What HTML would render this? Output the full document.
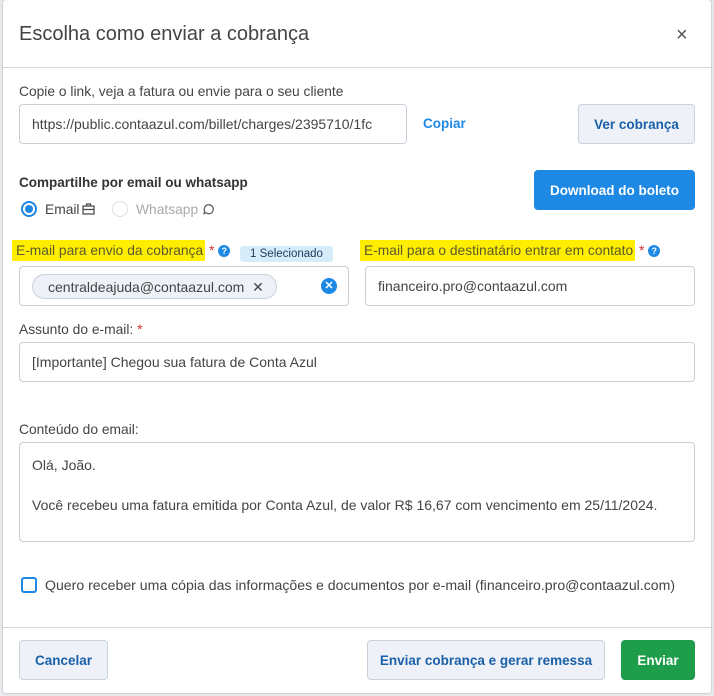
<!DOCTYPE html>
<html><head><meta charset="utf-8"><style>
*{box-sizing:border-box;margin:0;padding:0}
body{width:714px;height:696px;background:#e9ebee;font-family:"Liberation Sans",sans-serif;color:#333;position:relative;overflow:hidden}
.m{position:absolute;left:3px;top:0;width:708px;height:693px;background:#fff;border-radius:3px;box-shadow:0 0 2px rgba(0,0,0,.3)}
.a{position:absolute}
.inp{position:absolute;border:1px solid #c9cfd8;border-radius:4px;background:#fff;font-size:14px;color:#444;padding-left:12px;display:flex;align-items:center}
.btn{position:absolute;border-radius:4px;font-size:13.5px;font-weight:bold;display:flex;align-items:center;justify-content:center}
.sec{background:#eef2f8;border:1px solid #c9d1dc;color:#1a5fa8}
.lbl{font-size:13.8px;color:#444}
.hl{background:#ffee00;padding:3px 2px 3px 4px;color:#5a5a2a}
.star{color:#d32f2f}
.q{display:inline-block;width:12px;height:12px;border-radius:50%;background:#1e88e5;color:#fff;font-size:9px;font-weight:bold;text-align:center;line-height:12px;vertical-align:1px}
</style></head><body>
<div class="m">
<div class="a" style="left:16px;top:23px;font-size:20px;color:#444">Escolha como enviar a cobrança</div>
<div class="a" style="left:673px;top:24px;font-size:20px;color:#555">×</div>
<div class="a" style="left:0;top:67px;width:708px;height:1px;background:#d3d7dd"></div>
<div class="a lbl" style="left:16px;top:84px">Copie o link, veja a fatura ou envie para o seu cliente</div>
</div>
<div class="inp" style="left:19px;top:104px;width:388px;height:40px;white-space:nowrap;overflow:hidden">https://public.contaazul.com/billet/charges/2395710/1fc</div>
<div class="a" style="left:423px;top:116px;font-size:13.5px;font-weight:bold;color:#1e88e5">Copiar</div>
<div class="btn sec" style="left:578px;top:104px;width:117px;height:40px">Ver cobrança</div>
<div class="a" style="left:19px;top:175px;font-size:13.5px;font-weight:bold;color:#333">Compartilhe por email ou whatsapp</div>
<div class="btn" style="left:534px;top:170px;width:161px;height:40px;background:#1e88e5;color:#fff">Download do boleto</div>
<div class="a" style="left:21px;top:201px;width:16px;height:16px;border-radius:50%;border:2px solid #1e88e5;padding:2px"><div style="width:8px;height:8px;border-radius:50%;background:#1e88e5"></div></div>
<div class="a lbl" style="left:45px;top:202px">Email</div>
<svg class="a" style="left:82px;top:203px" width="13" height="12" viewBox="0 0 13 12" fill="none" stroke="#444" stroke-width="1.2"><rect x="1" y="3" width="11" height="8"/><path d="M4.5 3V1h4v2M1 6.5h11"/></svg>
<div class="a" style="left:112px;top:201px;width:16px;height:16px;border-radius:50%;border:1px solid #ddd"></div>
<div class="a lbl" style="left:136px;top:202px;color:#aaa">Whatsapp</div>
<svg class="a" style="left:202px;top:203px" width="12" height="12" viewBox="0 0 12 12" fill="none" stroke="#555" stroke-width="1.2"><path d="M2 10.5l.7-2.3A4.5 4.5 0 1 1 4 9.8z"/></svg>
<div class="a lbl" style="left:12px;top:243px"><span class="hl">E-mail para envio da cobrança</span> <span class="star">*</span> <span class="q">?</span></div>
<div class="a" style="left:240px;top:246px;width:93px;height:16px;background:#d6ecfb;border-radius:3px;font-size:11.5px;color:#1d3b5a;text-align:center;line-height:16px">1 Selecionado</div>
<div class="inp" style="left:19px;top:266px;width:330px;height:40px"></div>
<div class="a" style="left:32px;top:274px;width:245px;height:25px;border:1px solid #c9d1dc;border-radius:13px;background:#eef2f8;font-size:14px;color:#444;padding:4px 0 0 15px">centraldeajuda@contaazul.com &nbsp;✕</div>
<div class="a" style="left:321px;top:278px;width:16px;height:16px;border-radius:50%;background:#1e88e5;color:#fff;font-size:11px;font-weight:bold;text-align:center;line-height:16px">✕</div>
<div class="a lbl" style="left:360px;top:243px"><span class="hl">E-mail para o destinatário entrar em contato</span> <span class="star">*</span> <span class="q">?</span></div>
<div class="inp" style="left:365px;top:266px;width:330px;height:40px">financeiro.pro@contaazul.com</div>
<div class="a lbl" style="left:19px;top:322px">Assunto do e-mail: <span class="star">*</span></div>
<div class="inp" style="left:19px;top:342px;width:676px;height:40px">[Importante] Chegou sua fatura de Conta Azul</div>
<div class="a lbl" style="left:19px;top:422px">Conteúdo do email:</div>
<div class="inp" style="left:19px;top:442px;width:676px;height:100px;padding-top:12px;line-height:20px;display:block">Olá, João.<br><br>Você recebeu uma fatura emitida por Conta Azul, de valor R$ 16,67 com vencimento em 25/11/2024.</div>
<div class="a" style="left:21px;top:577px;width:16px;height:16px;border:2px solid #1e88e5;border-radius:3px"></div>
<div class="a lbl" style="left:45px;top:577px;font-size:14.1px">Quero receber uma cópia das informações e documentos por e-mail (financeiro.pro@contaazul.com)</div>
<div class="a" style="left:3px;top:627px;width:708px;height:1px;background:#d3d7dd"></div>
<div class="btn sec" style="left:19px;top:640px;width:89px;height:40px">Cancelar</div>
<div class="btn sec" style="left:367px;top:640px;width:238px;height:40px">Enviar cobrança e gerar remessa</div>
<div class="btn" style="left:621px;top:640px;width:74px;height:40px;background:#1e9e4a;color:#fff">Enviar</div>
</body></html>
